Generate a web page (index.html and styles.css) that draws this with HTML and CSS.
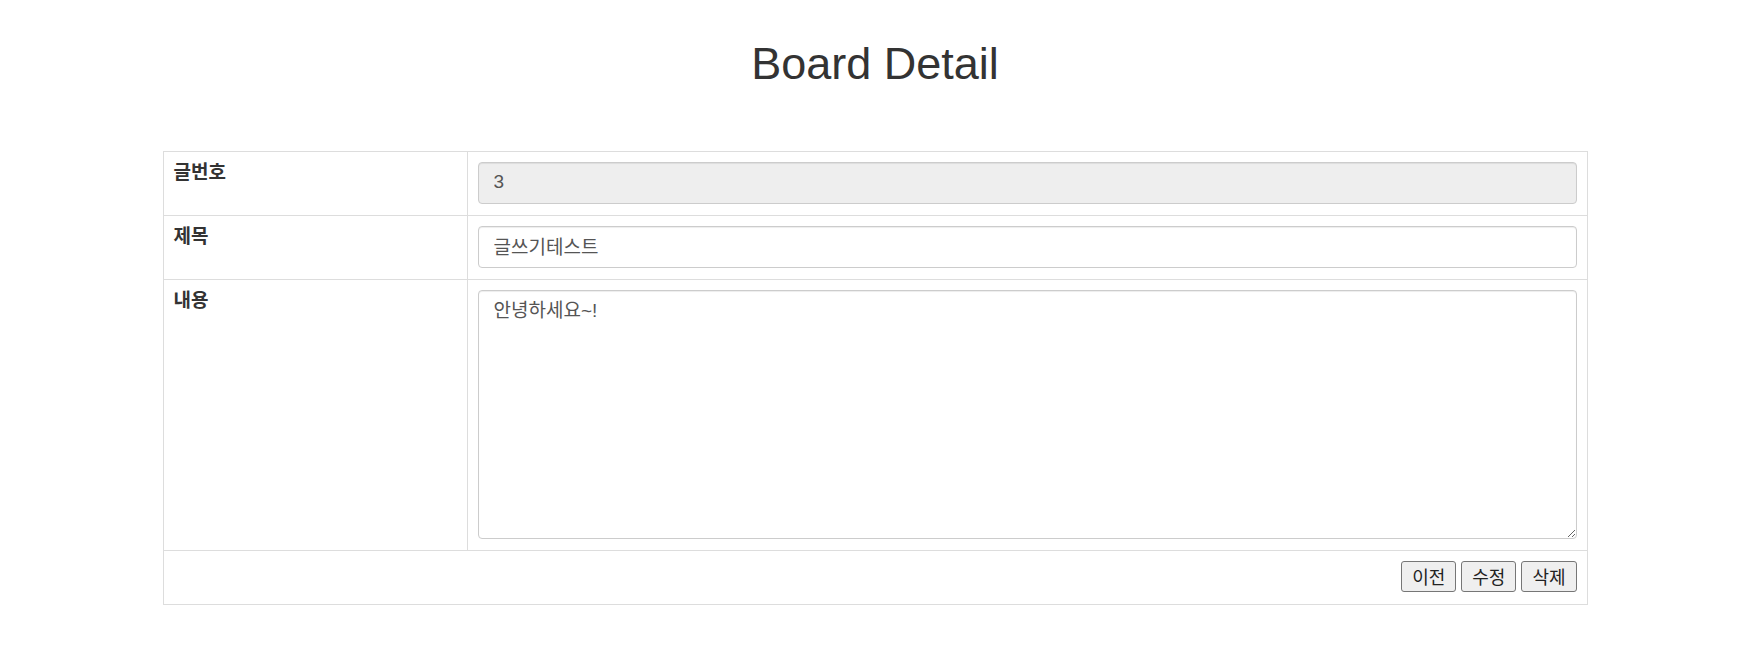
FILE: index.html
```html
<!DOCTYPE html>
<html lang="ko">
<head>
<meta charset="utf-8">
<title>Board Detail</title>
<link rel="stylesheet" href="styles.css">
</head>
<body>
<h1 class="title">Board Detail</h1>
<div class="wrap">
  <table class="detail">
    <colgroup><col class="col-label"><col></colgroup>
    <tr>
      <th>글번호</th>
      <td><input class="field" type="text" value="3" disabled></td>
    </tr>
    <tr>
      <th>제목</th>
      <td><input class="field" type="text" value="글쓰기테스트"></td>
    </tr>
    <tr>
      <th>내용</th>
      <td><textarea class="field area">안녕하세요~!</textarea></td>
    </tr>
    <tr>
      <td colspan="2" class="actions">
        <div class="btns">
          <button class="btn" type="button">이전</button>
          <button class="btn" type="button">수정</button>
          <button class="btn" type="button">삭제</button>
        </div>
      </td>
    </tr>
  </table>
</div>
</body>
</html>
```

FILE: styles.css
```css
body {
  margin: 0;
  padding-right: 10px;
  font-family: "Liberation Sans", "Noto Sans CJK KR", sans-serif;
  color: #333;
  background: #fff;
}

.title {
  margin: 39px 0 0;
  font-size: 45px;
  font-weight: normal;
  line-height: 1.1;
  text-align: center;
  color: #333;
}

.wrap {
  width: 1425px;
  margin: 62px auto 0;
}

.detail {
  width: 100%;
  border-collapse: collapse;
}

.col-label {
  width: 304px;
}

.detail th,
.detail td {
  border: 1px solid #ddd;
  padding: 10px 10px 11px;
  vertical-align: top;
}

.detail th {
  text-align: left;
  font-weight: bold;
  font-size: 19px;
  line-height: 22px;
  color: #333;
}

.field {
  display: block;
  box-sizing: border-box;
  width: 100%;
  height: 42px;
  margin: 0;
  padding: 5px 15px 7px;
  font-family: "Liberation Sans", "Noto Sans CJK KR", sans-serif;
  font-size: 19px;
  color: #555;
  background: #fff;
  border: 1px solid #ccc;
  border-radius: 4px;
  box-shadow: inset 0 1px 1px rgba(0, 0, 0, 0.075);
  outline: none;
}

.field:disabled {
  background: #eee;
  color: #555;
  opacity: 1;
}

.area {
  height: 249px;
  padding: 7px 15px;
  line-height: 26px;
  resize: vertical;
}

.detail .actions {
  padding-bottom: 12px;
}

.btns {
  display: flex;
  justify-content: flex-end;
  gap: 5px;
}

.btn {
  box-sizing: border-box;
  height: 31px;
  padding: 0 10px;
  margin: 0;
  font-family: "Liberation Sans", "Noto Sans CJK KR", sans-serif;
  font-size: 18px;
  color: #222;
  background: #efefef;
  border: 1px solid #767676;
  border-radius: 3px;
}
```
